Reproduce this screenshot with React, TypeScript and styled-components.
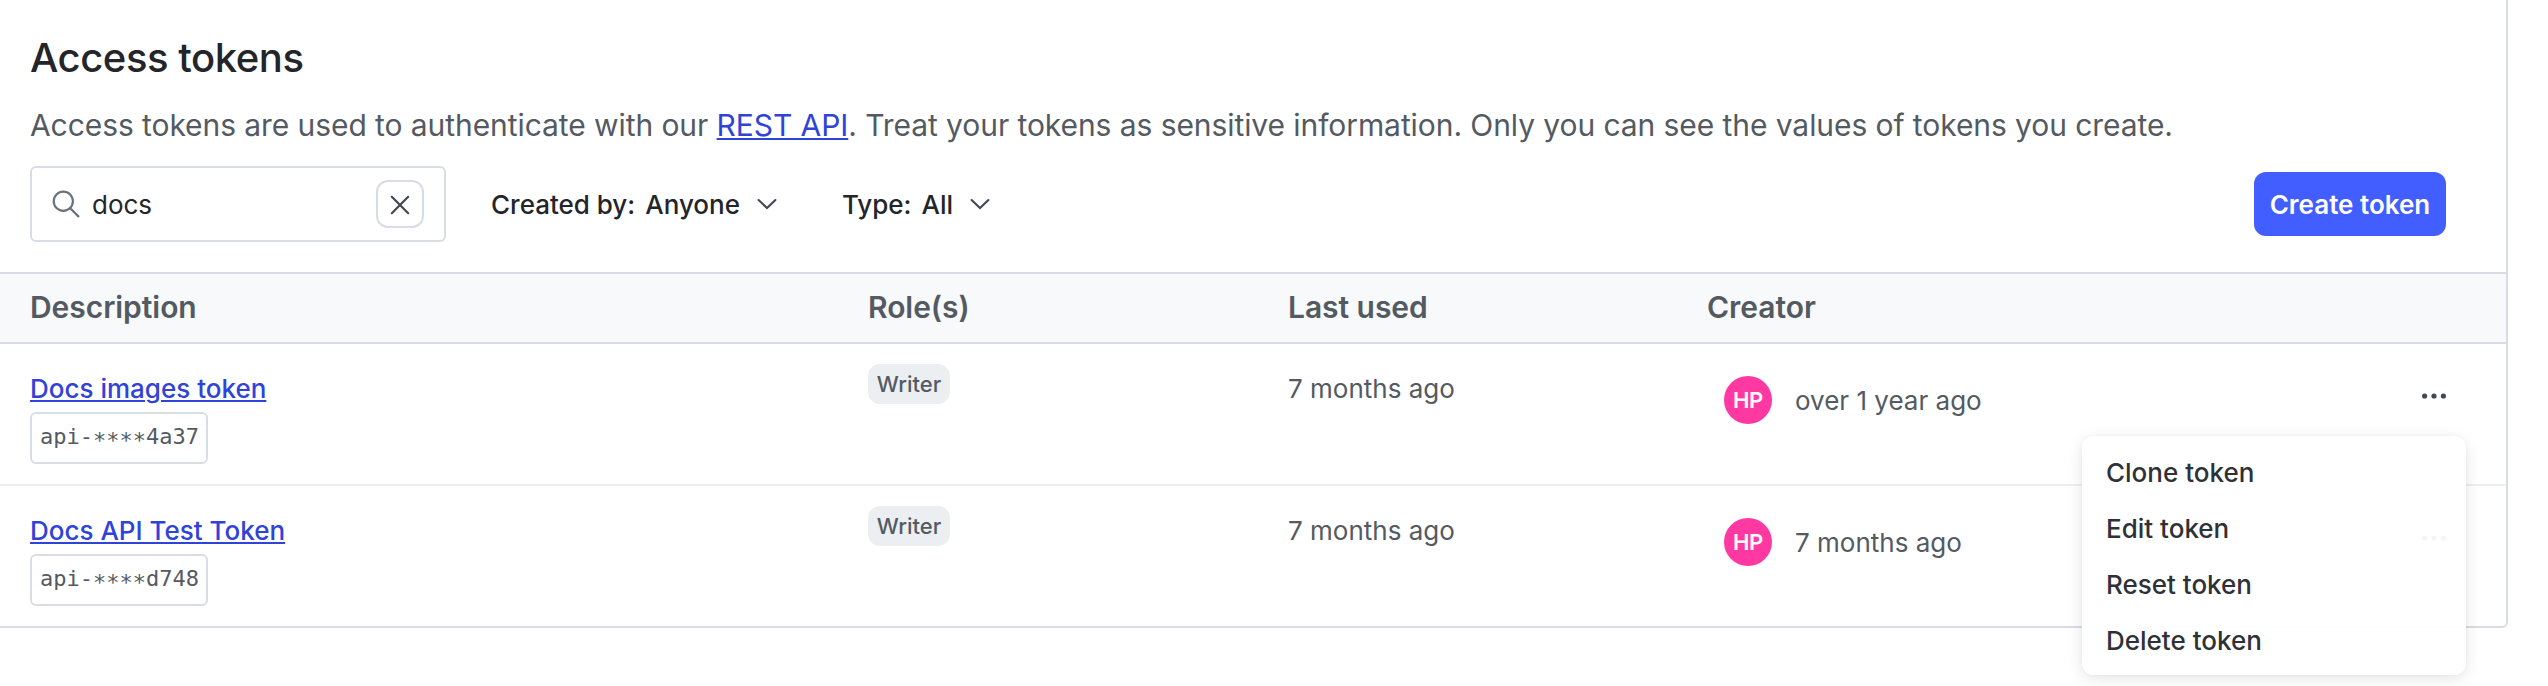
import React from 'react';
import styled, { createGlobalStyle, css } from 'styled-components';

const GlobalStyle = createGlobalStyle`
  *, *::before, *::after { box-sizing: border-box; }
  body {
    margin: 0;
    background: #fff;
    color: #23252a;
    font-family: Inter, 'Liberation Sans', sans-serif;
    font-size: 26px;
    overflow: hidden;
  }
  button, input { font: inherit; color: inherit; }
`;

const line = '#d8dde3';

const Page = styled.main`
  height: 686px;
  background: #fff;
`;

const Panel = styled.section`
  width: 2508px;
  height: 628px;
  border: solid ${line};
  border-width: 0 2px 2px 0;
  border-bottom-right-radius: 6px;
`;

const Intro = styled.header`
  height: 166px;
  padding: 34px 30px 0;
`;

const Title = styled.h1`
  margin: 0;
  font-size: 40px;
  line-height: 48px;
  font-weight: 500;
  letter-spacing: -0.45px;
`;

const Lead = styled.p`
  margin: 23px 0 0;
  color: #545a62;
  font-size: 30px;
  line-height: 40px;
  letter-spacing: -0.075px;
`;

const Link = styled.a<{ $medium?: boolean }>`
  color: #3043d9;
  font-weight: ${(p) => (p.$medium ? 500 : 400)};
  text-decoration: underline;
  text-decoration-thickness: 2px;
  text-underline-offset: 2px;
`;

const Toolbar = styled.div`
  display: flex;
  align-items: center;
  height: 76px;
  padding: 0 60px 0 30px;
`;

const SearchField = styled.div`
  display: flex;
  align-items: center;
  width: 416px;
  height: 76px;
  padding: 0 20px;
  border: 2px solid ${line};
  border-radius: 6px;
`;

const SearchInput = styled.input`
  flex: 1;
  min-width: 0;
  margin-left: 12px;
  padding: 0;
  border: 0;
  outline: 0;
  background: none;
`;

const ClearButton = styled.button`
  display: flex;
  align-items: center;
  justify-content: center;
  width: 48px;
  height: 48px;
  padding: 2px 0 0;
  border: 2px solid ${line};
  border-radius: 12px;
  background: #fff;
`;

const Filter = styled.button`
  display: flex;
  align-items: center;
  margin-left: 45px;
  padding: 0;
  border: 0;
  background: none;
  font-weight: 500;
  & + & { margin-left: 65px; }
`;

const FilterValue = styled.span`
  margin: 0 17px 0 10px;
`;

const PrimaryButton = styled.button`
  width: 192px;
  height: 64px;
  margin-left: auto;
  padding: 0;
  border: 0;
  border-radius: 12px;
  background: #425eff;
  color: #fff;
  font-weight: 600;
  white-space: nowrap;
`;

const columns = css`
  display: grid;
  grid-template-columns: 838px 420px 419px 1fr 120px;
  padding-left: 30px;
`;

const HeadRow = styled.div`
  ${columns}
  align-items: center;
  height: 72px;
  margin-top: 30px;
  padding-bottom: 2px;
  border: solid ${line};
  border-width: 2px 0;
  background: #f7f9fb;
  color: #545a62;
  font-size: 30px;
  font-weight: 600;
  letter-spacing: -0.05px;
`;

const Row = styled.div`
  ${columns}
  height: 140px;
  color: #545a62;
  & + & { border-top: 2px solid #ebeff2; height: 142px; }
`;

const NameCell = styled.div`
  display: flex;
  flex-direction: column;
  align-items: flex-start;
  padding-top: 29px;
  line-height: 32px;
`;

const TokenValue = styled.code`
  width: 178px;
  height: 52px;
  margin-top: 7px;
  padding: 0 8px;
  border: 2px solid ${line};
  border-radius: 6px;
  font-family: 'DejaVu Sans Mono', monospace;
  font-size: 22px;
  line-height: 46px;
  white-space: nowrap;
`;

const Mask = styled.span`
  line-height: 0;
  vertical-align: -4px;
`;

const RoleCell = styled.div`
  padding-top: 20px;
`;

const RoleTag = styled.span`
  display: inline-flex;
  align-items: center;
  justify-content: center;
  width: 82px;
  height: 40px;
  border-radius: 12px;
  background: #ebeff2;
  font-size: 22px;
  font-weight: 500;
`;

const UsedCell = styled.div`
  padding-top: 29px;
  line-height: 32px;
`;

const CreatorCell = styled.div`
  display: flex;
  align-items: center;
  height: 48px;
  margin-top: 32px;
  padding-left: 17px;
`;

const Avatar = styled.span`
  display: flex;
  align-items: center;
  justify-content: center;
  width: 48px;
  height: 48px;
  margin-right: 23px;
  border-radius: 50%;
  background: #ff38a2;
  color: #fff;
  font-size: 22px;
  font-weight: 600;
  letter-spacing: -0.4px;
`;

const ActionsCell = styled.div`
  position: relative;
  padding: 49px 0 0 36px;
`;

const MoreButton = styled.button`
  display: flex;
  padding: 0;
  border: 0;
  background: none;
`;

const Menu = styled.ul`
  position: absolute;
  z-index: 1;
  top: 92px;
  right: 40px;
  width: 384px;
  margin: 0;
  padding: 9px 0 6px;
  border-radius: 12px;
  background: rgba(255, 255, 255, 0.95);
  box-shadow: 0 4px 16px rgba(0, 0, 0, 0.1), 0 0 4px rgba(0, 0, 0, 0.04);
  list-style: none;
`;

const MenuItem = styled.li`
  height: 56px;
  padding-left: 24px;
  color: #2f3137;
  font-weight: 500;
  line-height: 56px;
`;

const SearchIcon = () => (
  <svg width="28" height="28" viewBox="0 0 28 28" fill="none" stroke="#6c727a" strokeWidth="2.2" strokeLinecap="round">
    <circle cx="11.3" cy="11.3" r="9.6" />
    <path d="M18.2 18.2L26.4 26.4" />
  </svg>
);

const CloseIcon = () => (
  <svg width="20" height="20" viewBox="0 0 20 20" fill="none" stroke="#414852" strokeWidth="2.2" strokeLinecap="round">
    <path d="M1.8 1.8L18.2 18.2M18.2 1.8L1.8 18.2" />
  </svg>
);

const ChevronIcon = () => (
  <svg width="20" height="12" viewBox="0 0 20 12" fill="none" stroke="#414852" strokeWidth="2.1" strokeLinecap="round">
    <path d="M1.6 2L10 10L18.4 2" />
  </svg>
);

const MoreIcon = () => (
  <svg width="24" height="6" viewBox="0 0 24 6" fill="#414852">
    <circle cx="2.6" cy="3" r="2.6" />
    <circle cx="12" cy="3" r="2.6" />
    <circle cx="21.4" cy="3" r="2.6" />
  </svg>
);

const tokens = [
  { name: 'Docs images token', suffix: '4a37', used: '7 months ago', created: 'over 1 year ago', open: true },
  { name: 'Docs API Test Token', suffix: 'd748', used: '7 months ago', created: '7 months ago', open: false },
];

const actions = ['Clone token', 'Edit token', 'Reset token', 'Delete token'];

export default function App() {
  return (
    <Page>
      <GlobalStyle />
      <Panel>
        <Intro>
          <Title>Access tokens</Title>
          <Lead>
            Access tokens are used to authenticate with our <Link href="#">REST API</Link>. Treat your tokens as
            sensitive information. Only you can see the values of tokens you create.
          </Lead>
        </Intro>
        <Toolbar>
          <SearchField>
            <SearchIcon />
            <SearchInput defaultValue="docs" aria-label="Search tokens" />
            <ClearButton aria-label="Clear search"><CloseIcon /></ClearButton>
          </SearchField>
          <Filter>Created by:<FilterValue>Anyone</FilterValue><ChevronIcon /></Filter>
          <Filter>Type:<FilterValue>All</FilterValue><ChevronIcon /></Filter>
          <PrimaryButton>Create token</PrimaryButton>
        </Toolbar>
        <HeadRow>
          <span>Description</span>
          <span>Role(s)</span>
          <span>Last used</span>
          <span>Creator</span>
        </HeadRow>
        {tokens.map((token) => (
          <Row key={token.suffix}>
            <NameCell>
              <Link href="#" $medium>{token.name}</Link>
              <TokenValue>api-<Mask>****</Mask>{token.suffix}</TokenValue>
            </NameCell>
            <RoleCell><RoleTag>Writer</RoleTag></RoleCell>
            <UsedCell>{token.used}</UsedCell>
            <CreatorCell><Avatar>HP</Avatar>{token.created}</CreatorCell>
            <ActionsCell>
              <MoreButton aria-label="Token actions"><MoreIcon /></MoreButton>
              {token.open && (
                <Menu>
                  {actions.map((action) => <MenuItem key={action}>{action}</MenuItem>)}
                </Menu>
              )}
            </ActionsCell>
          </Row>
        ))}
      </Panel>
    </Page>
  );
}
